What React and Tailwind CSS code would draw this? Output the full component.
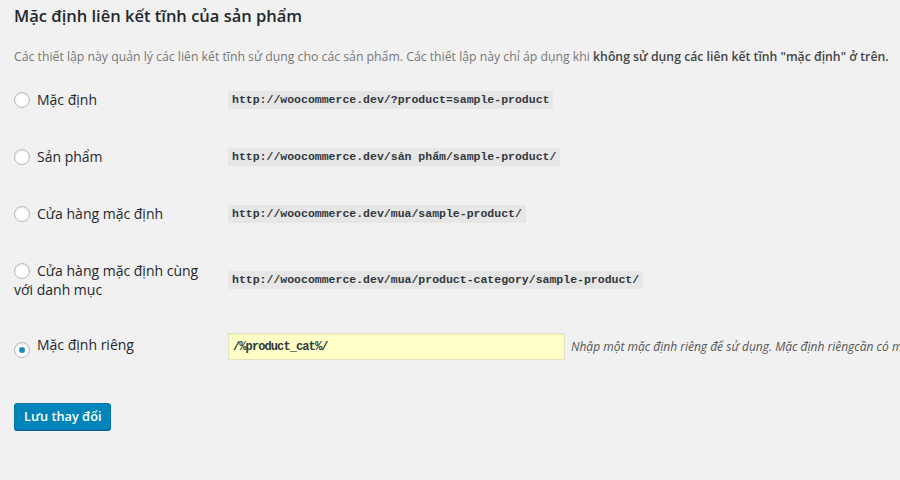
import React from 'react';

const rows = [
  { label: 'Mặc định', code: 'http://woocommerce.dev/?product=sample-product' },
  { label: 'Sản phẩm', code: 'http://woocommerce.dev/sản phẩm/sample-product/' },
  { label: 'Cửa hàng mặc định', code: 'http://woocommerce.dev/mua/sample-product/' },
  { label: 'Cửa hàng mặc định cùng với danh mục', code: 'http://woocommerce.dev/mua/product-category/sample-product/', tall: true },
];

function Radio({ checked }) {
  return (
    <span className="inline-flex items-center justify-center w-[16px] h-[16px] rounded-full bg-white border border-[#b4b9be] shadow-[inset_0_1px_2px_rgba(0,0,0,0.1)] align-[-3px] mr-[7px]">
      {checked && <span className="w-[6px] h-[6px] rounded-full bg-[#1e8cbe]" />}
    </span>
  );
}

export default function App() {
  return (
    <div className="w-[900px] h-[480px] overflow-hidden bg-[#f1f1f1] text-[#23282d] pl-[14px] pt-[4px] font-['Open_Sans',sans-serif]">
      <h2 className="text-[16.5px] leading-[24px] font-semibold">Mặc định liên kết tĩnh của sản phẩm</h2>
      <p className="mt-[19px] text-[12.25px] leading-[20px] text-[#777] whitespace-nowrap">
        Các thiết lập này quản lý các liên kết tĩnh sử dụng cho các sản phẩm. Các thiết lập này chỉ áp dụng khi{' '}
        <strong className="font-semibold text-[#444]">không sử dụng các liên kết tĩnh "mặc định" ở trên.</strong>
      </p>

      <div className="mt-[4px]">
        {rows.map((r) => (
          <div key={r.label} className={`flex items-center ${r.tall ? 'h-[76px]' : 'h-[57px]'}`}>
            <label className="w-[214px] shrink-0 text-[14px] leading-[19px] pr-[20px]">
              <Radio />
              {r.label}
            </label>
            <code className="bg-[#e6e6e6] text-[#32373c] text-[11.5px] leading-[18px] px-[4px] font-['Liberation_Mono',monospace] font-semibold whitespace-nowrap">
              {r.code}
            </code>
          </div>
        ))}
        <div className="flex items-center h-[57px] whitespace-nowrap">
          <label className="w-[214px] shrink-0 text-[14px] leading-[19px]">
            <Radio checked />
            Mặc định riêng
          </label>
          <input
            readOnly
            value="/%product_cat%/"
            className="w-[337px] shrink-0 h-[27px] bg-[#ffffc8] border border-[#e2e2c0] shadow-[inset_0_1px_2px_rgba(0,0,0,0.07)] px-[4px] text-[12px] tracking-[-0.9px] text-[#32373c] font-['Liberation_Mono',monospace] font-semibold outline-none"
          />
          <span className="ml-[6px] text-[12px] italic text-[#555]">
            Nhập một mặc định riêng để sử dụng. Mặc định riêngcần có một gạch chéo.
          </span>
        </div>
      </div>

      <button className="mt-[28px] h-[27px] px-[9px] rounded-[3px] bg-[#0085ba] border border-[#0073aa] shadow-[0_1px_0_#006799] text-white text-[12.75px] font-semibold">
        Lưu thay đổi
      </button>
    </div>
  );
}
